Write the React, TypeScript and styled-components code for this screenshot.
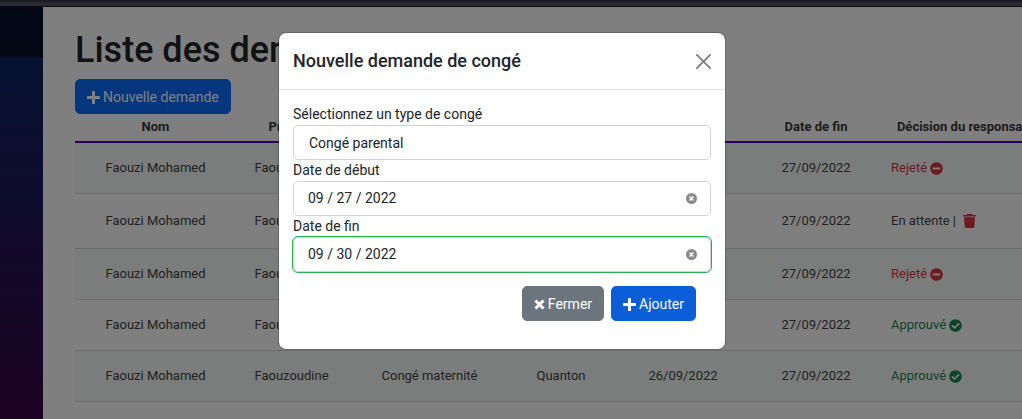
import React from "react";
import styled, { createGlobalStyle, css } from "styled-components";
import { FaCheckCircle, FaMinusCircle } from "react-icons/fa";

const GlobalStyle = createGlobalStyle`
  *, *::before, *::after { box-sizing: border-box; }
  html, body { margin: 0; }
  body {
    overflow: hidden;
    background: #fff;
    color: #212529;
    font: 400 14px/21px Roboto, "Liberation Sans", sans-serif;
  }
  button, input, select { font: inherit; color: inherit; margin: 0; }
`;

const Screen = styled.div`
  display: flex;
  flex-direction: column;
  min-height: 100vh;
`;

const BrowserEdge = styled.div`
  flex: none;
  height: 7px;
  background: #2b2a33;
  border-top: 2px solid #1c1b22;
  border-bottom: 1px solid #0c0c0d;
`;

const Page = styled.div`
  position: relative;
  display: flex;
  flex: 1;
`;

const Sidebar = styled.aside`
  flex: 0 0 43px;
  background: linear-gradient(180deg, rgb(5, 39, 103) 0%, #3a0647 100%);
`;

const SidebarTop = styled.div`
  height: 50px;
  background: rgba(0, 0, 0, 0.6);
`;

const Main = styled.main`
  flex: 1;
  min-width: 0;
  height: calc(100vh - 7px);
  overflow: hidden;
  padding: 22px 0 0 32px;
`;

const Heading = styled.h1`
  margin: 0 0 7px;
  font-size: 36px;
  font-weight: 500;
  line-height: 43px;
`;

const tones = {
  primary: "#0d6efd",
  active: "#0b5ed7",
  secondary: "#6c757d",
};

const Button = styled.button<{ $tone: keyof typeof tones }>`
  display: inline-flex;
  align-items: center;
  gap: 3px;
  padding: 7px 11px 5px;
  border: 1px solid ${(p) => tones[p.$tone]};
  border-radius: 5px;
  background: ${(p) => tones[p.$tone]};
  color: #fff;
  cursor: pointer;
`;

const Table = styled.table`
  width: 100%;
  min-width: 986px;
  table-layout: fixed;
  border-collapse: separate;
  border-spacing: 0;
  font-size: 13px;
  line-height: 20px;
  color: #444;
`;

const Column = styled.col<{ $width?: number }>`
  ${(p) => p.$width && css`width: ${p.$width}px;`}
`;

const HeadCell = styled.th`
  padding: 3px 0 4px;
  border-bottom: 2px solid #5000b0;
  color: #3a3a3a;
  font-weight: 700;
  text-align: center;
  white-space: nowrap;
`;

const Row = styled.tr`
  &:nth-child(odd) { background: #f6faf8; }
`;

const Cell = styled.td`
  padding: 15px 0;
  border-bottom: 1px solid #ddd;
  text-align: center;
`;

const DecisionCell = styled(Cell)`
  padding-left: 15px;
  text-align: left;
`;

const statusColors = { rejected: "#dc3545", approved: "#198754", pending: "#444" };

const Status = styled.span<{ $kind: keyof typeof statusColors }>`
  display: flex;
  align-items: center;
  gap: 3px;
  color: ${(p) => statusColors[p.$kind]};
`;

const DeleteButton = styled.button`
  display: flex;
  padding: 5px 4px;
  border: 0;
  background: none;
  color: #dc3545;
  cursor: pointer;
`;

const Backdrop = styled.div`
  position: absolute;
  inset: 0;
  display: flex;
  justify-content: center;
  align-items: flex-start;
  padding: 25px 18px 0 0;
  background: rgba(0, 0, 0, 0.5);
`;

const Dialog = styled.section`
  width: 100%;
  max-width: 448px;
  border: 1px solid rgba(0, 0, 0, 0.2);
  border-radius: 8px;
  background: #fff;
  background-clip: padding-box;
`;

const DialogHeader = styled.header`
  display: flex;
  align-items: center;
  justify-content: space-between;
  padding: 14px;
  border-bottom: 1px solid #dee2e6;
`;

const DialogTitle = styled.h2`
  margin: 0;
  font-size: 18px;
  font-weight: 500;
  line-height: 28px;
`;

const CloseButton = styled.button`
  display: flex;
  padding: 0;
  border: 0;
  background: none;
  opacity: 0.5;
  cursor: pointer;
`;

const Form = styled.form`
  display: flex;
  flex-direction: column;
  padding: 14px 14px 28px;
`;

const Label = styled.label`
  line-height: 21px;
`;

const Field = styled.div<{ $valid?: boolean }>`
  display: flex;
  align-items: center;
  height: 35px;
  padding: 0 13px 0 14px;
  border: 1px solid #ced4da;
  border-radius: 5px;
  background: #fff;
  ${(p) => p.$valid && css`outline: 1px solid #26b050;`}
`;

const DateInput = styled.input`
  flex: 1;
  min-width: 0;
  padding: 0;
  border: 0;
  outline: 0;
  background: none;
`;

const TypeSelect = styled.select`
  flex: 1;
  padding: 1px 1px 0;
  border: 0;
  outline: 0;
  background: none;
  appearance: none;
`;

const ClearButton = styled.button`
  display: flex;
  padding: 0;
  border: 0;
  background: none;
  cursor: pointer;
`;

const Actions = styled.div`
  display: flex;
  justify-content: flex-end;
  gap: 7px;
  padding: 14px 15px 0 0;
`;

const CloseIcon = () => (
  <svg width="15" height="15" viewBox="0 0 16 16" fill="#000" aria-hidden="true">
    <path d="M.293.293a1 1 0 0 1 1.414 0L8 6.586 14.293.293a1 1 0 1 1 1.414 1.414L9.414 8l6.293 6.293a1 1 0 0 1-1.414 1.414L8 9.414l-6.293 6.293a1 1 0 0 1-1.414-1.414L6.586 8 .293 1.707a1 1 0 0 1 0-1.414z" />
  </svg>
);

const ClearIcon = () => (
  <svg width="11" height="11" viewBox="0 0 12 12" aria-hidden="true">
    <circle cx="6" cy="6" r="6" fill="#8a8a8a" />
    <path d="M3.9 3.9l4.2 4.2M8.1 3.9L3.9 8.1" stroke="#fff" strokeWidth="1.6" />
  </svg>
);

const PlusIcon = () => (
  <svg width="13" height="13" viewBox="0 0 13 13" fill="currentColor" aria-hidden="true">
    <rect x="5" y="0" width="3" height="13" rx="0.6" />
    <rect x="0" y="5" width="13" height="3" rx="0.6" />
  </svg>
);

const CrossIcon = () => (
  <svg width="11" height="11" viewBox="0 0 11 11" aria-hidden="true">
    <path d="M1.5 1.5l8 8M9.5 1.5l-8 8" stroke="currentColor" strokeWidth="3.1" />
  </svg>
);

const TrashIcon = () => (
  <svg width="13" height="14" viewBox="0 0 13 14" fill="currentColor" aria-hidden="true">
    <path d="M4 0h5l.6.9H13v1.7H0V.9h3.4z" />
    <path d="M1 3.2h11l-.7 9.6c-.1.7-.6 1.2-1.3 1.2H3c-.7 0-1.2-.5-1.3-1.2z" />
  </svg>
);

type Kind = keyof typeof statusColors;

const requests: { type: string; unit: string; start: string; end: string; kind: Kind }[] = [
  { type: "Congé parental", unit: "Quanton", start: "26/09/2022", end: "27/09/2022", kind: "rejected" },
  { type: "Congé parental", unit: "Quanton", start: "26/09/2022", end: "27/09/2022", kind: "pending" },
  { type: "Congé parental", unit: "Quanton", start: "26/09/2022", end: "27/09/2022", kind: "rejected" },
  { type: "Congé maternité", unit: "Quanton", start: "26/09/2022", end: "27/09/2022", kind: "approved" },
  { type: "Congé maternité", unit: "Quanton", start: "26/09/2022", end: "27/09/2022", kind: "approved" },
];

const headings = ["Nom", "Prénom", "Type", "Site", "Date de début", "Date de fin", "Décision du responsable"];
const columnWidths = [161, 111, 165, 98, 146, 120, undefined];

function Decision({ kind }: { kind: Kind }) {
  if (kind === "rejected") return <Status $kind={kind}>Rejeté <FaMinusCircle /></Status>;
  if (kind === "approved") return <Status $kind={kind}>Approuvé <FaCheckCircle /></Status>;
  return (
    <Status $kind={kind}>
      En attente |
      <DeleteButton type="button" aria-label="Supprimer"><TrashIcon /></DeleteButton>
    </Status>
  );
}

function DateField({ id, label, value, valid }: { id: string; label: string; value: string; valid?: boolean }) {
  return (
    <>
      <Label htmlFor={id}>{label}</Label>
      <Field $valid={valid}>
        <DateInput id={id} type="text" defaultValue={value} />
        <ClearButton type="button" aria-label="Effacer"><ClearIcon /></ClearButton>
      </Field>
    </>
  );
}

export default function App() {
  return (
    <Screen>
      <GlobalStyle />
      <BrowserEdge />
      <Page>
        <Sidebar><SidebarTop /></Sidebar>
        <Main>
          <Heading>Liste des demandes</Heading>
          <Button type="button" $tone="primary"><PlusIcon />Nouvelle demande</Button>
          <Table>
            <colgroup>
              {columnWidths.map((width, i) => <Column key={i} $width={width} />)}
            </colgroup>
            <thead>
              <tr>{headings.map((h) => <HeadCell key={h} scope="col">{h}</HeadCell>)}</tr>
            </thead>
            <tbody>
              {requests.map((r, i) => (
                <Row key={i}>
                  <Cell>Faouzi Mohamed</Cell>
                  <Cell>Faouzoudine</Cell>
                  <Cell>{r.type}</Cell>
                  <Cell>{r.unit}</Cell>
                  <Cell>{r.start}</Cell>
                  <Cell>{r.end}</Cell>
                  <DecisionCell><Decision kind={r.kind} /></DecisionCell>
                </Row>
              ))}
            </tbody>
          </Table>
        </Main>
        <Backdrop>
          <Dialog role="dialog" aria-modal="true" aria-labelledby="dialog-title">
            <DialogHeader>
              <DialogTitle id="dialog-title">Nouvelle demande de congé</DialogTitle>
              <CloseButton type="button" aria-label="Fermer la fenêtre"><CloseIcon /></CloseButton>
            </DialogHeader>
            <Form>
              <Label htmlFor="leave-type">Sélectionnez un type de congé</Label>
              <Field>
                <TypeSelect id="leave-type" defaultValue="parental">
                  <option value="parental">Congé parental</option>
                </TypeSelect>
              </Field>
              <DateField id="start-date" label="Date de début" value="09 / 27 / 2022" />
              <DateField id="end-date" label="Date de fin" value="09 / 30 / 2022" valid />
              <Actions>
                <Button type="button" $tone="secondary"><CrossIcon />Fermer</Button>
                <Button type="button" $tone="active"><PlusIcon />Ajouter</Button>
              </Actions>
            </Form>
          </Dialog>
        </Backdrop>
      </Page>
    </Screen>
  );
}
